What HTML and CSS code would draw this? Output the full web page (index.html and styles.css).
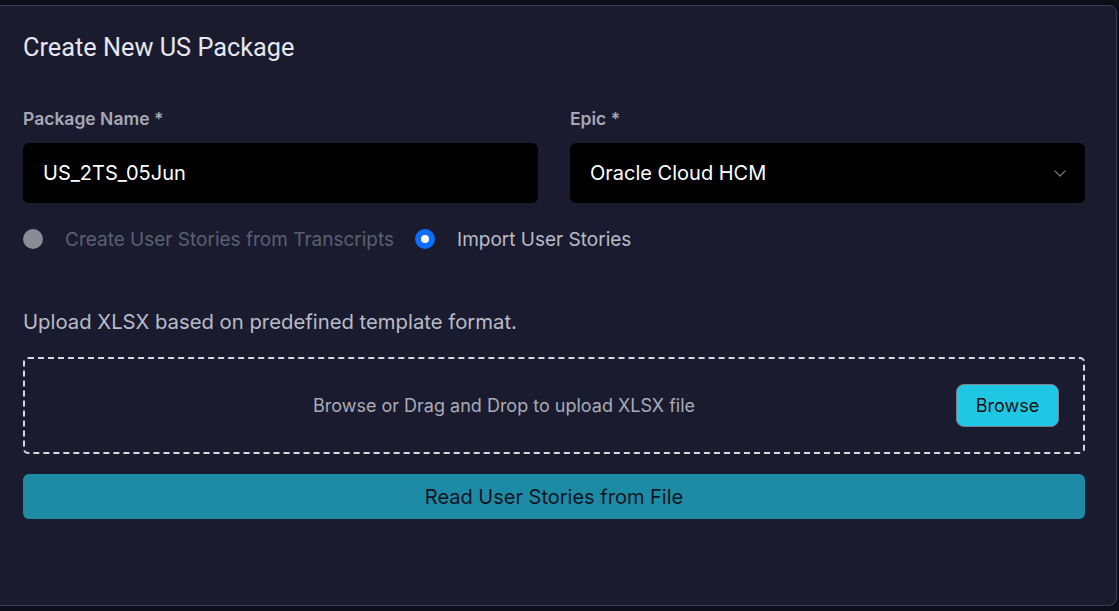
FILE: index.html
```html
<!DOCTYPE html>
<html lang="en">
<head>
    <meta charset="UTF-8">
    <meta name="viewport" content="width=device-width, initial-scale=1.0">
    <title>Create New US Package</title>
    <link rel="stylesheet" href="styles.css">
</head>
<body>
    <div class="modal">
        <h2 class="modal-title">Create New US Package</h2>

        <div class="field-row">
            <div class="field">
                <label class="field-label">Package Name *</label>
                <div class="input">US_2TS_05Jun</div>
            </div>
            <div class="field">
                <label class="field-label">Epic *</label>
                <div class="input select">
                    <span>Oracle Cloud HCM</span>
                    <svg class="chevron" width="16" height="16" viewBox="0 0 16 16" fill="none">
                        <path d="M2.5 5.5l5.5 5.5 5.5-5.5" stroke="#6b6d7d" stroke-width="1.3"/>
                    </svg>
                </div>
            </div>
        </div>

        <div class="radio-row">
            <span class="radio disabled"></span>
            <span class="radio-label disabled">Create User Stories from Transcripts</span>
            <span class="radio checked"></span>
            <span class="radio-label">Import User Stories</span>
        </div>

        <p class="hint">Upload XLSX based on predefined template format.</p>

        <div class="dropzone">
            <span class="drop-text">Browse or Drag and Drop to upload XLSX file</span>
            <button class="btn-browse">Browse</button>
        </div>

        <button class="btn-read">Read User Stories from File</button>
    </div>
</body>
</html>
```

FILE: styles.css
```css
body {
    margin: 0;
    padding: 0;
    background-color: #0e0e18;
    font-family: 'Inter', 'Liberation Sans', sans-serif;
    height: 611px;
    overflow: hidden;
}

.modal {
    box-sizing: border-box;
    height: 601px;
    margin: 5px 2px 0 -8px;
    padding: 24px 31px 0 30px;
    background-color: #1a1b2e;
    border: 1px solid #3b3c5a;
    border-radius: 8px;
}

.modal-title {
    margin: 0;
    font-family: 'Roboto', sans-serif;
    font-weight: 400;
    font-size: 25.3px;
    line-height: 36px;
    color: #e6e7ef;
}

.field-row {
    display: flex;
    gap: 32px;
    margin-top: 43px;
}

.field {
    flex: 1;
    display: flex;
    flex-direction: column;
}

.field-label {
    font-size: 17.5px;
    font-weight: 600;
    line-height: 20px;
    color: #a6a8b6;
    margin-bottom: 14px;
}

.input {
    box-sizing: border-box;
    height: 60px;
    padding: 0 20px;
    display: flex;
    align-items: center;
    background-color: #000;
    border-radius: 6px;
    color: #fff;
    font-size: 20px;
}

.select {
    justify-content: space-between;
}

.chevron {
    margin-right: -3px;
}

.radio-row {
    display: flex;
    align-items: center;
    margin-top: 25px;
    height: 22px;
}

.radio {
    box-sizing: border-box;
    width: 20px;
    height: 20px;
    border-radius: 50%;
    margin-right: 22px;
}

.radio.disabled {
    background-color: #8a8b95;
}

.radio.checked {
    border: 6px solid #0d6efd;
    background: #fff;
}

.radio-label {
    font-size: 19px;
    color: #b9bbc8;
    margin-right: 21px;
}

.radio-label.disabled {
    color: #5d5f73;
}

.hint {
    margin: 61px 0 0;
    font-size: 20.3px;
    line-height: 22px;
    color: #b9bbc8;
}

.dropzone {
    box-sizing: border-box;
    height: 97px;
    margin-top: 24px;
    padding: 0 24px 0 27px;
    display: flex;
    align-items: center;
    border: 2px dashed #d7d8e0;
    border-radius: 5px;
}

.drop-text {
    flex: 1;
    text-align: center;
    font-size: 18px;
    color: #a9abb8;
}

.btn-browse {
    box-sizing: border-box;
    width: 103px;
    height: 43px;
    background-color: #20c7e4;
    border: 1px solid #7a8290;
    border-radius: 8px;
    font-family: 'Inter', sans-serif;
    font-size: 18px;
    color: #111;
    cursor: pointer;
}

.btn-read {
    display: block;
    box-sizing: border-box;
    width: 100%;
    height: 45px;
    margin-top: 20px;
    background-color: #1e8ba6;
    border: none;
    border-radius: 6px;
    font-family: 'Inter', sans-serif;
    font-size: 20px;
    color: #0f1420;
    cursor: pointer;
}
```
